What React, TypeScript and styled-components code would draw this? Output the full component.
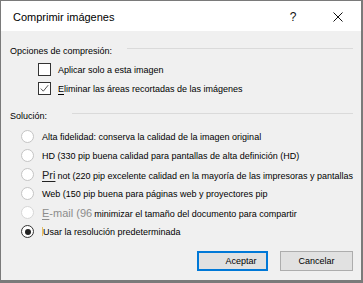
import styled, { createGlobalStyle } from 'styled-components';

const GlobalStyle = createGlobalStyle`
  html, body {
    margin: 0;
    padding: 0;
    background: #f0f0f0;
  }
  body {
    font-family: "Liberation Sans", Arial, sans-serif;
  }
`;

const Dialog = styled.div`
  width: 363px;
  height: 283px;
  box-sizing: border-box;
  border-style: solid;
  border-color: #7a7a7a;
  border-width: 1px 2px 3px 1px;
  background: #f0f0f0;
  display: flex;
  flex-direction: column;
  color: #000;
  font-size: 9px;
`;

const TitleBar = styled.div`
  height: 30px;
  flex: none;
  background: #fff;
  display: flex;
  align-items: center;
  padding: 2px 0 0 12px;
  box-sizing: border-box;
`;

const Title = styled.div`
  flex: 1;
  font-size: 11px;
  color: #000;
`;

const TitleButton = styled.div<{ $width: number }>`
  width: ${(p) => p.$width}px;
  height: 22px;
  display: flex;
  align-items: center;
  justify-content: center;
  font-size: 12px;
  color: #111;
`;

const Body = styled.div`
  flex: 1;
  display: flex;
  flex-direction: column;
  padding: 10px 8px 0 9px;
`;

const GroupLabel = styled.div<{ $lineGap: number; $top?: number }>`
  height: 19px;
  display: flex;
  align-items: center;
  margin-top: ${(p) => p.$top ?? 0}px;

  &::after {
    content: '';
    flex: 1;
    height: 1px;
    background: #dadada;
    margin: -5px 0 0 ${(p) => p.$lineGap}px;
  }
`;

const Options = styled.div<{ $indent: number; $top?: number }>`
  display: flex;
  flex-direction: column;
  padding-left: ${(p) => p.$indent}px;
  margin-top: ${(p) => p.$top ?? 0}px;
`;

const OptionRow = styled.div<{ $gap: number }>`
  height: 19px;
  display: flex;
  align-items: center;
  gap: ${(p) => p.$gap}px;
  white-space: nowrap;
`;

const Box = styled.span`
  width: 11px;
  height: 11px;
  flex: none;
  border: 1px solid #333;
  background: #fff;
  display: flex;
  align-items: center;
  justify-content: center;
`;

const Radio = styled.span<{ $checked?: boolean; $dim?: boolean }>`
  width: 11px;
  height: 11px;
  flex: none;
  border-radius: 50%;
  border: 1px solid ${(p) => (p.$checked ? '#333' : p.$dim ? '#d6d6d6' : '#c4c4c4')};
  background: #fff;
  display: flex;
  align-items: center;
  justify-content: center;

  &::after {
    content: '';
    display: ${(p) => (p.$checked ? 'block' : 'none')};
    width: 6px;
    height: 6px;
    border-radius: 50%;
    background: #222;
  }
`;

const Key = styled.span`
  text-decoration: underline;
  text-decoration-thickness: 1px;
  text-underline-offset: 2px;
`;

const Big = styled.span<{ $dim?: boolean }>`
  font-size: 11px;
  color: ${(p) => (p.$dim ? '#8c8c8c' : '#222')};
  margin-right: 2px;
`;

const Caret = styled.span`
  display: inline-block;
  width: 1px;
  height: 9px;
  background: #e8c060;
  vertical-align: -1px;
`;

const Buttons = styled.div`
  display: flex;
  justify-content: flex-end;
  gap: 12px;
  margin-top: 10px;
`;

const Button = styled.div<{ $primary?: boolean; $width: number }>`
  width: ${(p) => p.$width}px;
  height: 20px;
  box-sizing: border-box;
  display: flex;
  align-items: center;
  justify-content: center;
  background: #e1e1e1;
  border: ${(p) => (p.$primary ? '2px solid #0078d7' : '1px solid #adadad')};
  padding-left: ${(p) => (p.$primary ? 17 : 0)}px;
  font-size: 9px;
`;

const Check = () => (
  <svg width="9" height="9" viewBox="0 0 9 9">
    <path d="M0.8 4.6 L3.3 7.2 L8.2 1.2" fill="none" stroke="#555" strokeWidth="1" />
  </svg>
);

const CloseIcon = () => (
  <svg width="10" height="10" viewBox="0 0 10 10">
    <path d="M0.5 0.5 L9.5 9.5 M9.5 0.5 L0.5 9.5" stroke="#111" strokeWidth="1" />
  </svg>
);

export default function App() {
  return (
    <>
      <GlobalStyle />
      <Dialog>
        <TitleBar>
          <Title>Comprimir imágenes</Title>
          <TitleButton $width={44}>?</TitleButton>
          <TitleButton $width={46}>
            <CloseIcon />
          </TitleButton>
        </TitleBar>
        <Body>
          <GroupLabel $lineGap={15}>Opciones de compresión:</GroupLabel>
          <Options $indent={28}>
            <OptionRow $gap={7}>
              <Box />
              <span>Aplicar solo a esta imagen</span>
            </OptionRow>
            <OptionRow $gap={7}>
              <Box>
                <Check />
              </Box>
              <span>
                <Key>E</Key>liminar las áreas recortadas de las imágenes
              </span>
            </OptionRow>
          </Options>

          <GroupLabel $lineGap={25} $top={8}>
            Solución:
          </GroupLabel>
          <Options $indent={11} $top={2}>
            <OptionRow $gap={8}>
              <Radio />
              <span>Alta fidelidad: conserva la calidad de la imagen original</span>
            </OptionRow>
            <OptionRow $gap={8}>
              <Radio />
              <span>HD (330 pip buena calidad para pantallas de alta definición (HD)</span>
            </OptionRow>
            <OptionRow $gap={8}>
              <Radio />
              <span>
                <Big>
                  <Key>Pri</Key>
                </Big>
                not (220 pip excelente calidad en la mayoría de las impresoras y pantallas
              </span>
            </OptionRow>
            <OptionRow $gap={8}>
              <Radio />
              <span>Web (150 pip buena para páginas web y proyectores pip</span>
            </OptionRow>
            <OptionRow $gap={8}>
              <Radio $dim />
              <span>
                <Big $dim>
                  <Key>E</Key>-mail (96
                </Big>
                minimizar el tamaño del documento para compartir
              </span>
            </OptionRow>
            <OptionRow $gap={8}>
              <Radio $checked />
              <span>
                <Caret />
                Usar la resolución predeterminada
              </span>
            </OptionRow>
          </Options>

          <Buttons>
            <Button $primary $width={71}>
              Aceptar
            </Button>
            <Button $width={73}>Cancelar</Button>
          </Buttons>
        </Body>
      </Dialog>
    </>
  );
}
